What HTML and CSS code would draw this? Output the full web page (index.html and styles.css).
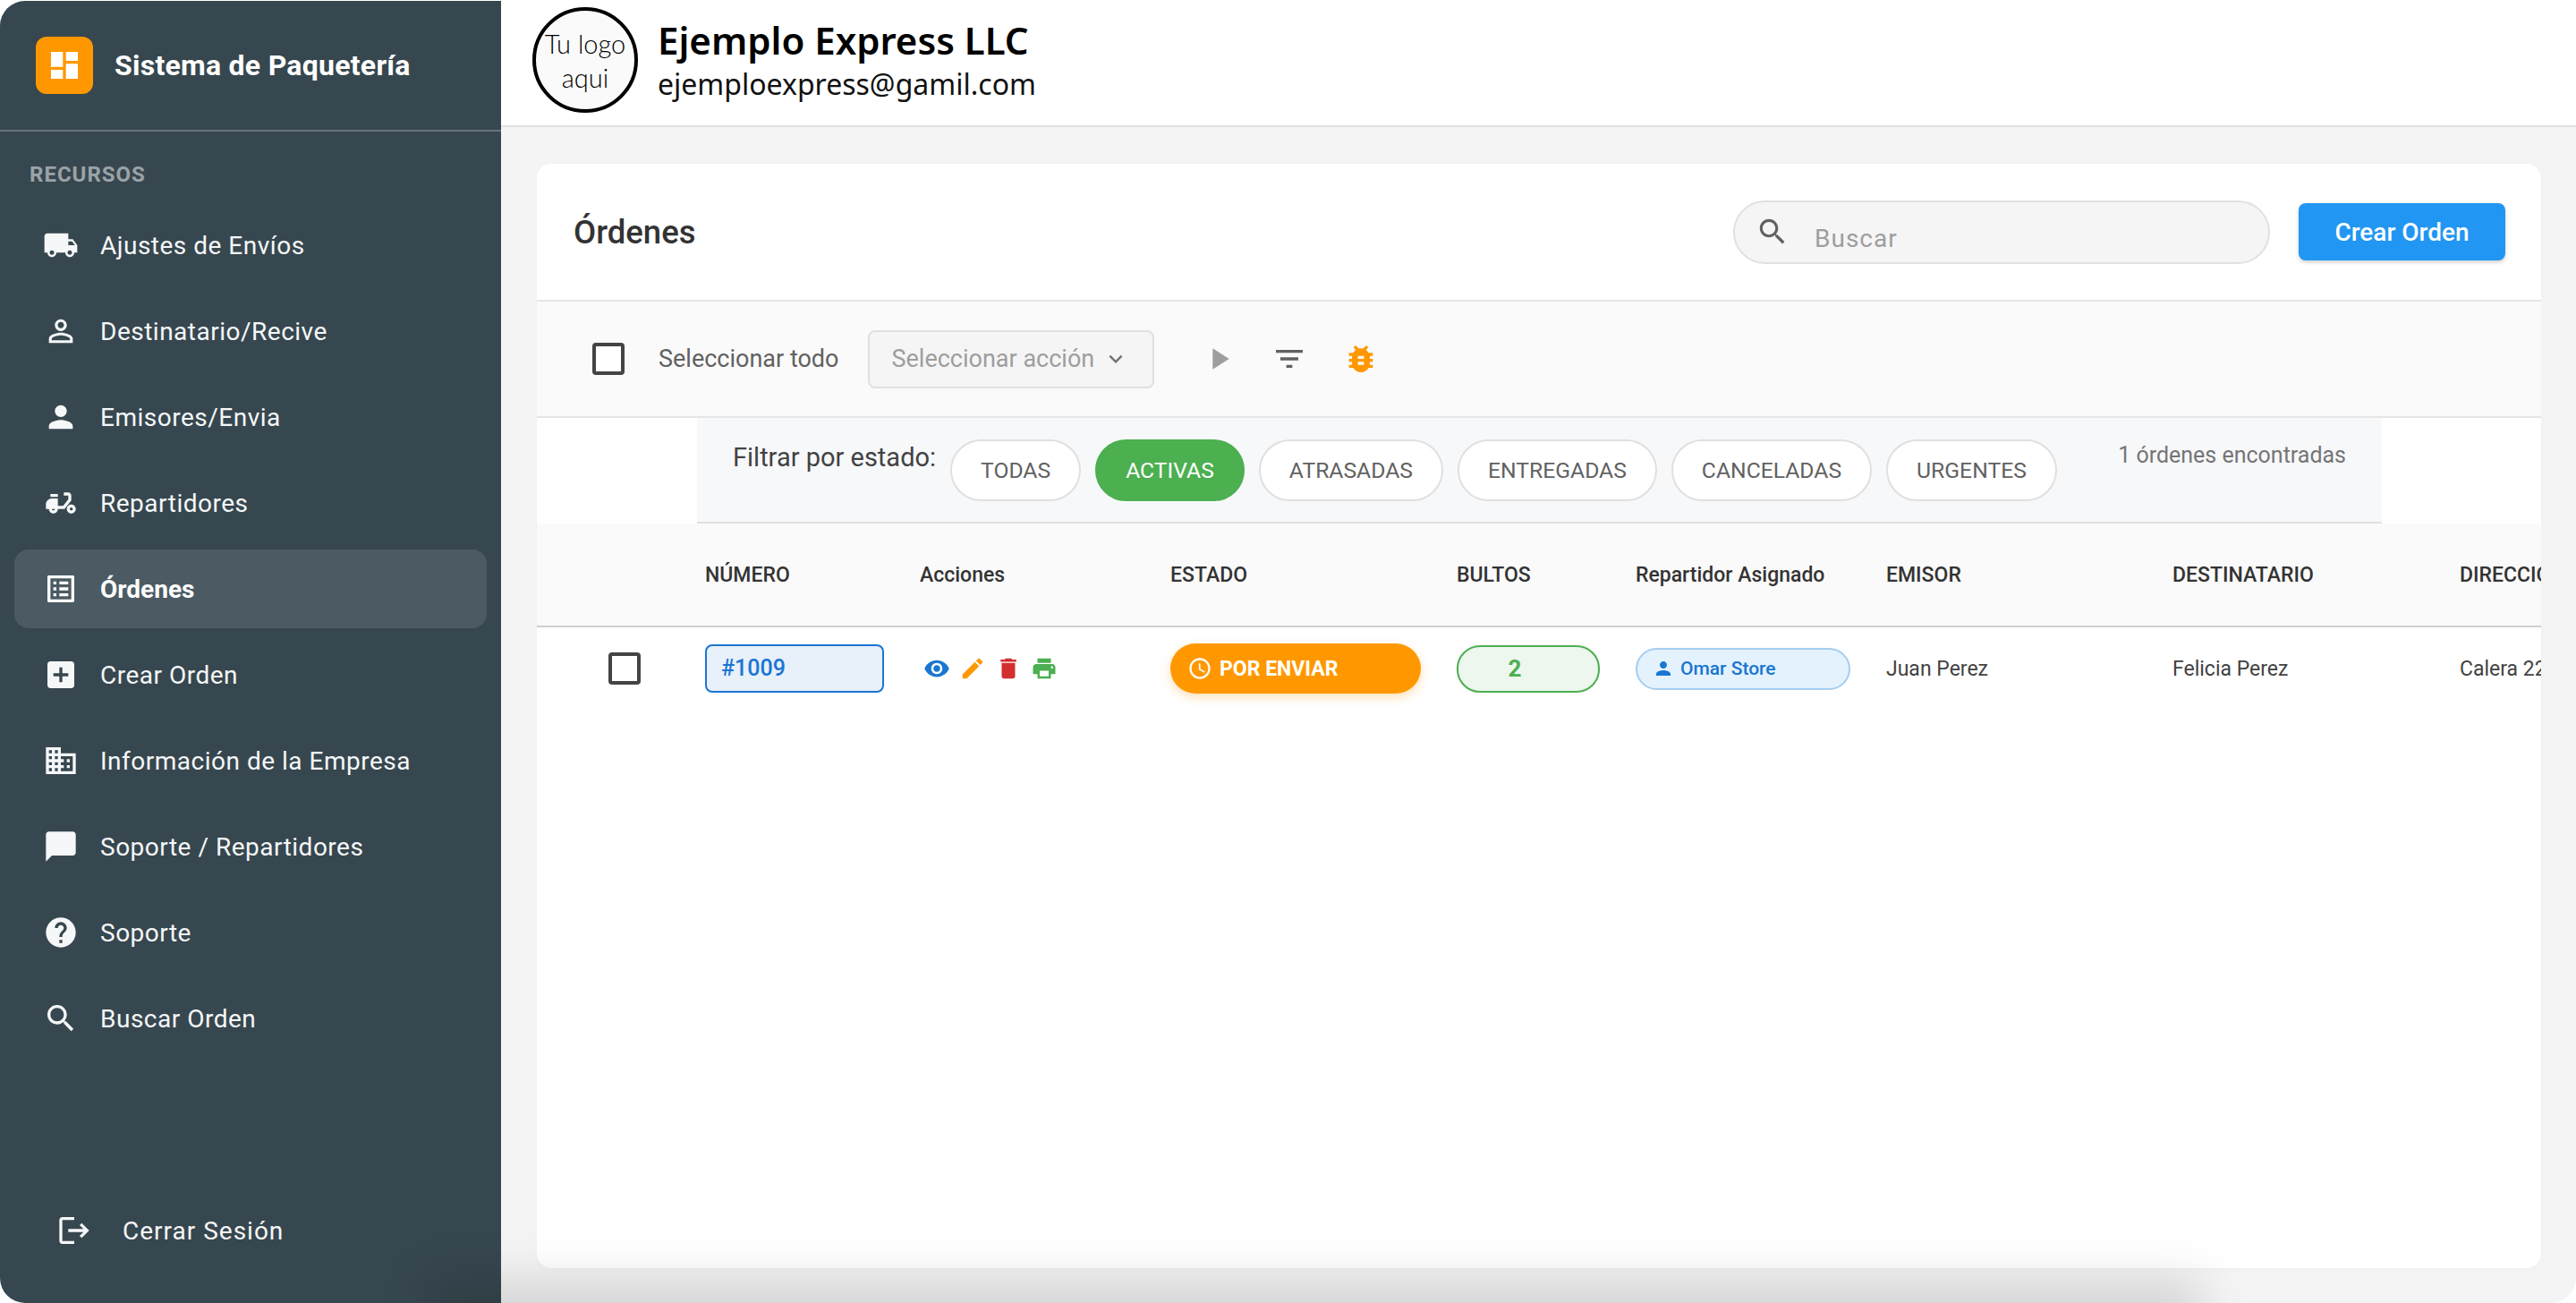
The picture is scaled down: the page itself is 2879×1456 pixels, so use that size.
FILE: index.html
```html
<!DOCTYPE html>
<html lang="es">
<head>
    <meta charset="UTF-8">
    <title>Sistema de Paquetería</title>
    <link rel="stylesheet" href="styles.css">
</head>
<body>

    <svg class="sprite" xmlns="http://www.w3.org/2000/svg">
        <symbol id="i-dashboard" viewBox="0 0 24 24"><path d="M3 13h8V3H3v10zm0 8h8v-6H3v6zm10 0h8V11h-8v10zm0-18v6h8V3h-8z"/></symbol>
        <symbol id="i-truck" viewBox="0 0 24 24"><path d="M20 8h-3V4H3c-1.1 0-2 .9-2 2v11h2c0 1.66 1.34 3 3 3s3-1.34 3-3h6c0 1.66 1.34 3 3 3s3-1.34 3-3h2v-5l-3-4zM6 18.5c-.83 0-1.5-.67-1.5-1.5s.67-1.5 1.5-1.5 1.5.67 1.5 1.5-.67 1.5-1.5 1.5zm13.5-9l1.96 2.5H17V9.5h2.5zm-1.5 9c-.83 0-1.5-.67-1.5-1.5s.67-1.5 1.5-1.5 1.5.67 1.5 1.5-.67 1.5-1.5 1.5z"/></symbol>
        <symbol id="i-person-outline" viewBox="0 0 24 24"><path d="M12 5.9c1.16 0 2.1.94 2.1 2.1s-.94 2.1-2.1 2.1S9.9 9.16 9.9 8s.94-2.1 2.1-2.1m0 9c2.97 0 6.1 1.46 6.1 2.1v1.1H5.9V17c0-.64 3.13-2.1 6.1-2.1M12 4C9.79 4 8 5.79 8 8s1.79 4 4 4 4-1.79 4-4-1.79-4-4-4zm0 9c-2.67 0-8 1.34-8 4v3h16v-3c0-2.66-5.33-4-8-4z"/></symbol>
        <symbol id="i-person" viewBox="0 0 24 24"><path d="M12 12c2.21 0 4-1.79 4-4s-1.79-4-4-4-4 1.79-4 4 1.79 4 4 4zm0 2c-2.67 0-8 1.34-8 4v2h16v-2c0-2.66-5.33-4-8-4z"/></symbol>
        <symbol id="i-moped" viewBox="0 0 24 24"><path d="M19 7c0-1.1-.9-2-2-2h-3v2h3v2.65L13.52 14H10V9H6c-2.21 0-4 1.79-4 4v3h2c0 1.66 1.34 3 3 3s3-1.34 3-3h4.48L19 10.35V7zM7 17c-.55 0-1-.45-1-1h2c0 .55-.45 1-1 1z"/><path d="M5 6h5v2H5zM19 13c-1.66 0-3 1.34-3 3s1.34 3 3 3 3-1.34 3-3-1.34-3-3-3zm0 4c-.55 0-1-.45-1-1s.45-1 1-1 1 .45 1 1-.45 1-1 1z"/></symbol>
        <symbol id="i-list" viewBox="0 0 24 24"><path d="M19 5v14H5V5h14m1.1-2H3.9c-.5 0-.9.4-.9.9v16.2c0 .4.4.9.9.9h16.2c.4 0 .9-.5.9-.9V3.9c0-.5-.5-.9-.9-.9zM11 7h6v2h-6V7zm0 4h6v2h-6v-2zm0 4h6v2h-6zM7 7h2v2H7zm0 4h2v2H7zm0 4h2v2H7z"/></symbol>
        <symbol id="i-add" viewBox="0 0 24 24"><path d="M19 3H5c-1.11 0-2 .9-2 2v14c0 1.1.89 2 2 2h14c1.1 0 2-.9 2-2V5c0-1.1-.9-2-2-2zm-2 10h-4v4h-2v-4H7v-2h4V7h2v4h4v2z"/></symbol>
        <symbol id="i-domain" viewBox="0 0 24 24"><path d="M12 7V3H2v18h20V7H12zM6 19H4v-2h2v2zm0-4H4v-2h2v2zm0-4H4V9h2v2zm0-4H4V5h2v2zm4 12H8v-2h2v2zm0-4H8v-2h2v2zm0-4H8V9h2v2zm0-4H8V5h2v2zm10 12h-8v-2h2v-2h-2v-2h2v-2h-2V9h8v10zm-2-8h-2v2h2v-2zm0 4h-2v2h2v-2z"/></symbol>
        <symbol id="i-chat" viewBox="0 0 24 24"><path d="M20 2H4c-1.1 0-2 .9-2 2v18l4-4h14c1.1 0 2-.9 2-2V4c0-1.1-.9-2-2-2z"/></symbol>
        <symbol id="i-help" viewBox="0 0 24 24"><path d="M12 2C6.48 2 2 6.48 2 12s4.48 10 10 10 10-4.48 10-10S17.52 2 12 2zm1 17h-2v-2h2v2zm2.07-7.75l-.9.92C13.45 12.9 13 13.5 13 15h-2v-.5c0-1.1.45-2.1 1.17-2.83l1.24-1.26c.37-.36.59-.86.59-1.41 0-1.1-.9-2-2-2s-2 .9-2 2H8c0-2.21 1.79-4 4-4s4 1.79 4 4c0 .88-.36 1.68-.93 2.25z"/></symbol>
        <symbol id="i-search" viewBox="0 0 24 24"><path d="M15.5 14h-.79l-.28-.27C15.41 12.59 16 11.11 16 9.5 16 5.91 13.09 3 9.5 3S3 5.91 3 9.5 5.91 16 9.5 16c1.61 0 3.09-.59 4.23-1.57l.27.28v.79l5 4.99L20.49 19l-4.99-5zm-6 0C7.01 14 5 11.99 5 9.5S7.01 5 9.5 5 14 7.01 14 9.5 11.99 14 9.5 14z"/></symbol>
        <symbol id="i-logout" viewBox="0 0 24 24"><path d="M17 7l-1.41 1.41L18.17 11H8v2h10.17l-2.58 2.58L17 17l5-5zM4 5h8V3H4c-1.1 0-2 .9-2 2v14c0 1.1.9 2 2 2h8v-2H4V5z"/></symbol>
        <symbol id="i-chevron" viewBox="0 0 24 24"><path d="M16.59 8.59L12 13.17 7.41 8.59 6 10l6 6 6-6z"/></symbol>
        <symbol id="i-play" viewBox="0 0 24 24"><path d="M8 5v14l11-7z"/></symbol>
        <symbol id="i-filter" viewBox="0 0 24 24"><path d="M10 18h4v-2h-4v2zM3 6v2h18V6H3zm3 7h12v-2H6v2z"/></symbol>
        <symbol id="i-bug" viewBox="0 0 24 24"><path d="M20 8h-2.81c-.45-.78-1.07-1.45-1.82-1.96L17 4.41 15.59 3l-2.17 2.17C12.96 5.06 12.49 5 12 5c-.49 0-.96.06-1.41.17L8.41 3 7 4.41l1.62 1.63C7.88 6.55 7.26 7.22 6.81 8H4v2h2.09c-.05.33-.09.66-.09 1v1H4v2h2v1c0 .34.04.67.09 1H4v2h2.81c1.04 1.79 2.97 3 5.19 3s4.15-1.21 5.19-3H20v-2h-2.09c.05-.33.09-.66.09-1v-1h2v-2h-2v-1c0-.34-.04-.67-.09-1H20V8zm-6 8h-4v-2h4v2zm0-4h-4v-2h4v2z"/></symbol>
        <symbol id="i-eye" viewBox="0 0 24 24"><path d="M12 4.5C7 4.5 2.73 7.61 1 12c1.73 4.39 6 7.5 11 7.5s9.27-3.11 11-7.5c-1.73-4.39-6-7.5-11-7.5zM12 17c-2.76 0-5-2.24-5-5s2.24-5 5-5 5 2.24 5 5-2.24 5-5 5zm0-8c-1.66 0-3 1.34-3 3s1.34 3 3 3 3-1.34 3-3-1.34-3-3-3z"/></symbol>
        <symbol id="i-edit" viewBox="0 0 24 24"><path d="M3 17.25V21h3.75L17.81 9.94l-3.75-3.75L3 17.25zM20.71 7.04c.39-.39.39-1.02 0-1.41l-2.34-2.34c-.39-.39-1.02-.39-1.41 0l-1.83 1.83 3.75 3.75 1.83-1.83z"/></symbol>
        <symbol id="i-delete" viewBox="0 0 24 24"><path d="M6 19c0 1.1.9 2 2 2h8c1.1 0 2-.9 2-2V7H6v12zM19 4h-3.5l-1-1h-5l-1 1H5v2h14V4z"/></symbol>
        <symbol id="i-print" viewBox="0 0 24 24"><path d="M19 8H5c-1.66 0-3 1.34-3 3v6h4v4h12v-4h4v-6c0-1.66-1.34-3-3-3zm-3 11H8v-5h8v5zm3-7c-.55 0-1-.45-1-1s.45-1 1-1 1 .45 1 1-.45 1-1 1zm-1-9H6v4h12V3z"/></symbol>
        <symbol id="i-clock" viewBox="0 0 24 24"><path d="M11.99 2C6.47 2 2 6.48 2 12s4.47 10 9.99 10C17.52 22 22 17.52 22 12S17.52 2 11.99 2zM12 20c-4.42 0-8-3.58-8-8s3.58-8 8-8 8 3.58 8 8-3.58 8-8 8zm.5-13H11v6l5.25 3.15.75-1.23-4.5-2.67z"/></symbol>
    </svg>

    <div class="app">
        <aside class="sidebar">
            <div class="brand">
                <span class="brand-logo"><svg class="icon"><use href="#i-dashboard"/></svg></span>
                <span class="brand-name">Sistema de Paquetería</span>
            </div>
            <div class="nav-title">RECURSOS</div>
            <nav class="nav">
                <a class="nav-item" href="#"><svg class="icon"><use href="#i-truck"/></svg>Ajustes de Envíos</a>
                <a class="nav-item" href="#"><svg class="icon"><use href="#i-person-outline"/></svg>Destinatario/Recive</a>
                <a class="nav-item" href="#"><svg class="icon"><use href="#i-person"/></svg>Emisores/Envia</a>
                <a class="nav-item" href="#"><svg class="icon"><use href="#i-moped"/></svg>Repartidores</a>
                <a class="nav-item active" href="#"><svg class="icon"><use href="#i-list"/></svg>Órdenes</a>
                <a class="nav-item" href="#"><svg class="icon"><use href="#i-add"/></svg>Crear Orden</a>
                <a class="nav-item" href="#"><svg class="icon"><use href="#i-domain"/></svg>Información de la Empresa</a>
                <a class="nav-item" href="#"><svg class="icon"><use href="#i-chat"/></svg>Soporte / Repartidores</a>
                <a class="nav-item" href="#"><svg class="icon"><use href="#i-help"/></svg>Soporte</a>
                <a class="nav-item" href="#"><svg class="icon"><use href="#i-search"/></svg>Buscar Orden</a>
            </nav>
            <a class="logout" href="#"><svg class="icon"><use href="#i-logout"/></svg>Cerrar Sesión</a>
        </aside>

        <div class="content">
            <header class="topbar">
                <div class="company-logo"><span>Tu logo<br>aqui</span></div>
                <div class="company-info">
                    <div class="company-name">Ejemplo Express LLC</div>
                    <div class="company-mail">ejemploexpress@gamil.com</div>
                </div>
            </header>

            <main class="main">
                <section class="card">
                    <div class="card-head">
                        <h1>Órdenes</h1>
                        <div class="search">
                            <svg class="icon"><use href="#i-search"/></svg>
                            <span>Buscar</span>
                        </div>
                        <button class="btn-create">Crear Orden</button>
                    </div>

                    <div class="toolbar">
                        <span class="checkbox"></span>
                        <span class="select-all">Seleccionar todo</span>
                        <div class="select">
                            <span>Seleccionar acción</span>
                            <svg class="icon"><use href="#i-chevron"/></svg>
                        </div>
                        <svg class="icon tool-play"><use href="#i-play"/></svg>
                        <svg class="icon tool-filter"><use href="#i-filter"/></svg>
                        <svg class="icon tool-bug"><use href="#i-bug"/></svg>
                    </div>

                    <div class="filters">
                        <span class="filters-label">Filtrar por estado:</span>
                        <span class="pill">TODAS</span>
                        <span class="pill on">ACTIVAS</span>
                        <span class="pill">ATRASADAS</span>
                        <span class="pill">ENTREGADAS</span>
                        <span class="pill">CANCELADAS</span>
                        <span class="pill">URGENTES</span>
                        <span class="filters-count">1 órdenes encontradas</span>
                    </div>

                    <div class="table-wrap">
                        <table>
                            <thead>
                                <tr>
                                    <th></th>
                                    <th>NÚMERO</th>
                                    <th>Acciones</th>
                                    <th>ESTADO</th>
                                    <th>BULTOS</th>
                                    <th>Repartidor Asignado</th>
                                    <th>EMISOR</th>
                                    <th>DESTINATARIO</th>
                                    <th>DIRECCIÓN</th>
                                </tr>
                            </thead>
                            <tbody>
                                <tr>
                                    <td><span class="checkbox small"></span></td>
                                    <td><span class="order-no">#1009</span></td>
                                    <td>
                                        <div class="actions">
                                            <svg class="icon eye"><use href="#i-eye"/></svg>
                                            <svg class="icon edit"><use href="#i-edit"/></svg>
                                            <svg class="icon del"><use href="#i-delete"/></svg>
                                            <svg class="icon print"><use href="#i-print"/></svg>
                                        </div>
                                    </td>
                                    <td><span class="status"><svg class="icon"><use href="#i-clock"/></svg>POR ENVIAR</span></td>
                                    <td><span class="bultos">2</span></td>
                                    <td><span class="driver"><svg class="icon"><use href="#i-person"/></svg>Omar Store</span></td>
                                    <td>Juan Perez</td>
                                    <td>Felicia Perez</td>
                                    <td>Calera 2233</td>
                                </tr>
                            </tbody>
                        </table>
                    </div>
                </section>
            </main>
        </div>

        <div class="bottom-shade"></div>
    </div>

</body>
</html>
```

FILE: styles.css
```css
html, body {
    height: 100%;
    margin: 0;
}

body {
    font-family: Roboto, Arial, sans-serif;
    background: #fff;
    overflow: hidden;
}

.sprite {
    display: none;
}

.icon {
    display: block;
    width: 40px;
    height: 40px;
    fill: currentColor;
    flex-shrink: 0;
}

a {
    color: inherit;
    text-decoration: none;
}

.app {
    position: relative;
    display: flex;
    height: 1455px;
    margin-top: 1px;
    border-radius: 28px;
    overflow: hidden;
    background: #f4f4f4;
}

/* sidebar */
.sidebar {
    width: 560px;
    flex-shrink: 0;
    display: flex;
    flex-direction: column;
    background: #37474f;
    color: #fff;
}

.brand {
    display: flex;
    align-items: center;
    gap: 24px;
    height: 144px;
    padding: 0 40px;
    border-bottom: 2px solid rgba(255, 255, 255, 0.24);
}

.brand-logo {
    display: flex;
    align-items: center;
    justify-content: center;
    width: 64px;
    height: 64px;
    border-radius: 12px;
    background: #ff9800;
}

.brand-name {
    font-size: 32px;
    font-weight: 700;
    letter-spacing: 0.26px;
}

.nav-title {
    margin: 34px 0 0 33px;
    font-size: 24px;
    line-height: 28px;
    font-weight: 700;
    letter-spacing: 1px;
    color: rgba(255, 255, 255, 0.5);
}

.nav {
    display: flex;
    flex-direction: column;
    gap: 8px;
    margin: 21px 16px 0;
}

.nav-item {
    display: flex;
    align-items: center;
    gap: 24px;
    height: 88px;
    padding-left: 32px;
    border-radius: 16px;
    font-size: 28px;
    letter-spacing: 0.5px;
    color: #f5f7f8;
}

.nav-item.active {
    background: #4c5b63;
    color: #fff;
    font-weight: 700;
    letter-spacing: 0;
}

.logout {
    display: flex;
    align-items: center;
    gap: 34px;
    margin-top: auto;
    margin-bottom: 61px;
    padding-left: 63px;
    font-size: 28px;
    letter-spacing: 1px;
    color: #f5f7f8;
}

/* top bar */
.content {
    flex: 1;
    min-width: 0;
    display: flex;
    flex-direction: column;
}

.topbar {
    display: flex;
    align-items: center;
    height: 141px;
    padding: 0 0 8px 35px;
    box-sizing: border-box;
    gap: 22px;
    background: #fff;
    border-bottom: 2px solid #e2e2e2;
}

.company-logo {
    display: flex;
    align-items: center;
    justify-content: center;
    width: 118px;
    height: 118px;
    box-sizing: border-box;
    padding-top: 2px;
    border: 4px solid #000;
    border-radius: 50%;
    background: #fafafa;
    text-align: center;
    font-family: Lato, sans-serif;
    font-weight: 300;
    font-size: 29px;
    line-height: 38px;
    color: #000;
}

.company-info {
    margin-top: 4px;
}

.company-name {
    font-family: "Noto Sans", sans-serif;
    font-size: 42px;
    line-height: 50px;
    font-weight: 600;
    color: #000;
}

.company-mail {
    font-family: "Noto Sans", sans-serif;
    font-size: 32px;
    line-height: 48px;
    color: #111;
}

/* main card */
.main {
    flex: 1;
    min-height: 0;
    display: flex;
    padding: 41px 39px 39px 40px;
}

.card {
    flex: 1;
    min-width: 0;
    display: flex;
    flex-direction: column;
    background: #fff;
    border-radius: 16px;
    overflow: hidden;
    box-shadow: 0 2px 8px rgba(0, 0, 0, 0.02);
}

.card-head {
    display: flex;
    align-items: center;
    height: 154px;
    box-sizing: border-box;
    padding: 0 40px 0 41px;
    border-bottom: 2px solid #e6e6e6;
}

.card-head h1 {
    flex: 1;
    margin: 0;
    font-size: 36.5px;
    font-weight: 500;
    color: #333;
}

.search {
    display: flex;
    align-items: center;
    gap: 28px;
    width: 600px;
    height: 71px;
    box-sizing: border-box;
    margin-right: 32px;
    padding-left: 23px;
    border: 2px solid #e0e0e0;
    border-radius: 36px;
    background: #f5f5f5;
    color: #9e9e9e;
    font-size: 28px;
    letter-spacing: 1px;
}

.search .icon {
    width: 38px;
    height: 38px;
    color: #616161;
}

.search span {
    padding-top: 14px;
}

.btn-create {
    width: 231px;
    height: 64px;
    border: none;
    border-radius: 8px;
    background: #2196f3;
    color: #fff;
    font-family: inherit;
    font-size: 28px;
    font-weight: 500;
    box-shadow: 0 2px 4px rgba(0, 0, 0, 0.2);
}

/* toolbar */
.toolbar {
    display: flex;
    align-items: center;
    height: 130px;
    box-sizing: border-box;
    padding-left: 62px;
    background: #fafafa;
    border-bottom: 2px solid #e6e6e6;
}

.checkbox {
    display: block;
    width: 36px;
    height: 36px;
    box-sizing: border-box;
    border: 4px solid #444;
    border-radius: 4px;
    background: #fff;
}

.select-all {
    margin-left: 38px;
    font-size: 27px;
    color: #616161;
}

.select {
    display: flex;
    align-items: center;
    width: 320px;
    height: 65px;
    box-sizing: border-box;
    margin-left: 32px;
    padding-left: 25px;
    border: 2px solid #e0e0e0;
    border-radius: 8px;
    background: #f5f5f5;
    color: #9e9e9e;
    font-size: 27px;
}

.select .icon {
    width: 30px;
    height: 30px;
    margin-left: 9px;
    color: #757575;
}

.tool-play {
    margin-left: 52px;
    color: #9e9e9e;
}

.tool-filter {
    margin-left: 39px;
    color: #616161;
}

.tool-bug {
    margin-left: 40px;
    color: #ff9800;
}

/* status filter */
.filters {
    display: flex;
    align-items: flex-start;
    gap: 16px;
    height: 118px;
    box-sizing: border-box;
    margin: 0 178px 0 179px;
    padding: 24px 40px 0;
    background: #f7f8fa;
    border-bottom: 2px solid #e0e0e0;
    white-space: nowrap;
}

.filters-label {
    font-size: 29px;
    line-height: 40px;
    color: #424242;
}

.pill {
    display: flex;
    align-items: center;
    height: 69px;
    box-sizing: border-box;
    padding: 0 32px;
    border: 2px solid #e0e0e0;
    border-radius: 35px;
    background: #fff;
    font-size: 24.7px;
    color: #616161;
}

.pill.on {
    background: #4caf50;
    border-color: #4caf50;
    color: #fff;
}

.filters-count {
    margin-left: auto;
    font-size: 25px;
    line-height: 36px;
    color: #757575;
}

/* orders table */
.table-wrap {
    flex: 1;
    overflow: hidden;
}

table {
    width: 2500px;
    table-layout: fixed;
    border-collapse: collapse;
}

th {
    height: 114px;
    padding: 0;
    text-align: left;
    font-size: 23px;
    font-weight: 500;
    color: #333;
    background: #fafafa;
    border-bottom: 2px solid #cfcfcf;
}

td {
    height: 92px;
    padding: 0;
    font-size: 23px;
    color: #424242;
    vertical-align: middle;
}

th:nth-child(1) { width: 188px; }
th:nth-child(2) { width: 240px; }
th:nth-child(3) { width: 280px; }
th:nth-child(4) { width: 320px; }
th:nth-child(5) { width: 200px; }
th:nth-child(6) { width: 280px; }
th:nth-child(7) { width: 320px; }
th:nth-child(8) { width: 321px; }

.checkbox.small {
    margin-left: 80px;
}

.order-no {
    display: block;
    width: 200px;
    height: 54px;
    box-sizing: border-box;
    padding-left: 16px;
    border: 2px solid #1976d2;
    border-radius: 8px;
    background: #e8f0fa;
    color: #1976d2;
    font-size: 25px;
    font-weight: 500;
    line-height: 50px;
}

.actions {
    display: flex;
    gap: 10px;
    padding-left: 4px;
}

.actions .icon {
    width: 30px;
    height: 30px;
}

.eye { color: #1976d2; }
.edit { color: #ff9800; }
.del { color: #d32f2f; }
.print { color: #4caf50; }

.status {
    display: flex;
    align-items: center;
    gap: 8px;
    width: 280px;
    height: 56px;
    box-sizing: border-box;
    padding-left: 19px;
    border-radius: 28px;
    background: #ff9800;
    color: #fff;
    font-size: 23px;
    font-weight: 700;
    box-shadow: 0 4px 12px rgba(255, 152, 0, 0.3);
}

.status .icon {
    width: 28px;
    height: 28px;
}

.bultos {
    display: block;
    width: 160px;
    height: 53px;
    box-sizing: border-box;
    padding-right: 30px;
    border: 2px solid #4caf50;
    border-radius: 26px;
    background: #edf7ee;
    color: #4caf50;
    font-size: 26px;
    font-weight: 700;
    line-height: 49px;
    text-align: center;
}

.driver {
    display: flex;
    align-items: center;
    gap: 7px;
    width: 240px;
    height: 47px;
    box-sizing: border-box;
    padding-left: 17px;
    border: 2px solid #a5cdf0;
    border-radius: 24px;
    background: #e3f2fd;
    color: #1976d2;
    font-size: 21px;
    font-weight: 500;
}

.driver .icon {
    width: 24px;
    height: 24px;
}

/* soft shadow along the bottom edge */
.bottom-shade {
    position: absolute;
    left: 480px;
    right: 420px;
    bottom: -60px;
    height: 86px;
    background: rgba(0, 0, 0, 0.13);
    filter: blur(26px);
}
```
